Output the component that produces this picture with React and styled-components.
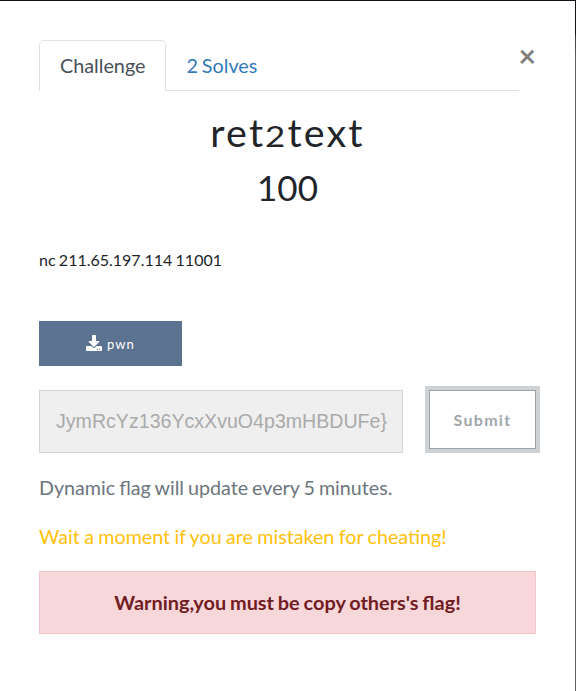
import React from "react";
import styled, { createGlobalStyle } from "styled-components";
import { FaDownload } from "react-icons/fa";

const GlobalStyle = createGlobalStyle`
  * { box-sizing: border-box; }
  body {
    margin: 0;
    background: #fff;
    font-family: Lato, sans-serif;
    color: #212529;
  }
`;

const Modal = styled.main`
  width: 576px;
  height: 691px;
  padding: 39px 39px 0;
  border: 0 solid #14111a;
  border-width: 1px 1px 0 0;
  border-image: linear-gradient(#14111a 34px, #3c3c40 36px, #606264 60px) 1;
  background: #fff;
  overflow: hidden;
`;

const Header = styled.header`
  display: flex;
  align-items: flex-start;
`;

const Tabs = styled.nav`
  display: flex;
  width: 480px;
  height: 51px;
  border-bottom: 1px solid #dee2e6;
`;

const Tab = styled.a`
  height: 51px;
  padding: 0 ${(p) => (p.$active ? "20px" : "19px")};
  border: 1px solid ${(p) => (p.$active ? "#dee2e6" : "transparent")};
  border-bottom-color: ${(p) => (p.$active ? "#fff" : "transparent")};
  border-radius: 5px 5px 0 0;
  color: ${(p) => (p.$active ? "#495057" : "#337ab7")};
  font-size: 19.8px;
  line-height: 49px;
  word-spacing: -1.2px;
  white-space: nowrap;
`;

const Close = styled.button`
  margin: 0;
  padding: 0;
  border: 0;
  background: none;
  color: #808080;
  font: 700 30px/30px Lato, sans-serif;
`;

const Title = styled.h2`
  display: flex;
  justify-content: center;
  align-items: baseline;
  margin: 16px 0 0;
  font: 400 39.5px/50px Lato, sans-serif;
  letter-spacing: 2.2px;
`;

const OldStyleFigure = styled.span`
  margin: 0 1px 0 2px;
  font-size: 29px;
  transform: scaleX(1.2);
`;

const Points = styled.h3`
  margin: 1px 0 0;
  font-size: 35px;
  line-height: 50px;
  font-weight: 400;
  text-align: center;
`;

const Description = styled.p`
  margin: 36px 0 0;
  font-size: 16px;
  line-height: 24px;
  word-spacing: -0.8px;
`;

const Download = styled.a`
  display: flex;
  align-items: center;
  justify-content: center;
  gap: 5px;
  width: 143px;
  height: 45px;
  margin-top: 49px;
  background: #5b7290;
  color: #fff;
  font-size: 13px;
  letter-spacing: 1.1px;
  svg { margin-bottom: 1px; font-size: 16px; }
`;

const FlagForm = styled.form`
  display: flex;
  justify-content: space-between;
  align-items: flex-start;
  margin-top: 24px;
`;

const FlagInput = styled.input`
  width: 364px;
  height: 63px;
  padding: 0 12px 0 16px;
  border: 1px solid #ced4da;
  border-radius: 0;
  background: #efefef;
  color: #aaa;
  font: 19.6px "Liberation Sans", Arial, sans-serif;
`;

const Submit = styled.button`
  width: 107px;
  height: 59px;
  padding: 0;
  border: 1px solid #9aa1a7;
  background: #fff;
  box-shadow: 0 0 0 4px #ced2d5;
  color: #a1a6aa;
  font: 700 16px Lato, sans-serif;
  letter-spacing: 1.3px;
`;

const Note = styled.p`
  margin: ${(p) => (p.$warning ? "19px" : "20px")} 0 0;
  color: ${(p) => (p.$warning ? "#ffc107" : "#6c757d")};
  font-size: 19.7px;
  line-height: 30px;
  word-spacing: ${(p) => (p.$warning ? "-0.7px" : "-1px")};
`;

const Alert = styled.div`
  height: 63px;
  margin-top: 19px;
  border: 1px solid #f1c6cb;
  background: #f7d7da;
  color: #721c24;
  font-size: 19.9px;
  font-weight: 700;
  line-height: 61px;
  word-spacing: -1px;
  text-align: center;
`;

export default function App() {
  return (
    <>
      <GlobalStyle />
      <Modal>
        <Header>
          <Tabs>
            <Tab $active>Challenge</Tab>
            <Tab>2 Solves</Tab>
          </Tabs>
          <Close aria-label="Close">×</Close>
        </Header>
        <Title>
          <span>ret</span>
          <OldStyleFigure>2</OldStyleFigure>
          <span>text</span>
        </Title>
        <Points>100</Points>
        <Description>nc 211.65.197.114 11001</Description>
        <Download>
          <FaDownload />
          <span>pwn</span>
        </Download>
        <FlagForm>
          <FlagInput readOnly value="JymRcYz136YcxXvuO4p3mHBDUFe}" />
          <Submit type="button">Submit</Submit>
        </FlagForm>
        <Note>Dynamic flag will update every 5 minutes.</Note>
        <Note $warning>Wait a moment if you are mistaken for cheating!</Note>
        <Alert>Warning,you must be copy others's flag!</Alert>
      </Modal>
    </>
  );
}
